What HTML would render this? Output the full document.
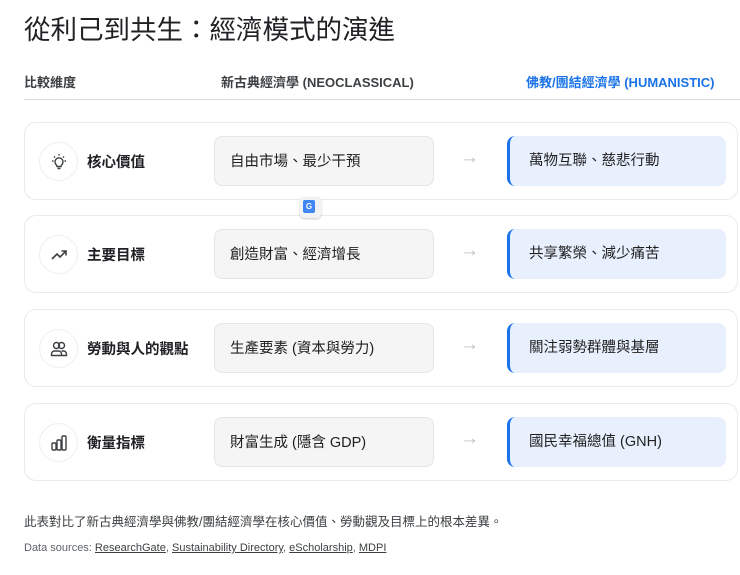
<!DOCTYPE html>
<html><head><meta charset="utf-8"><style>
*{margin:0;padding:0;box-sizing:border-box}
body{width:740px;height:575px;background:#fff;font-family:"Liberation Sans","Noto Sans CJK TC",sans-serif;color:#202124;position:relative;overflow:hidden}
.t{position:absolute;left:24px;top:8px;font-size:26.5px;font-weight:400;letter-spacing:0}
.h{position:absolute;top:72px;font-size:13px;font-weight:700;color:#3c4043}
.line{position:absolute;left:24px;top:99px;width:716px;height:1px;background:#dadce0}
.row{position:absolute;left:24px;width:714px;height:78px;border:1px solid #e8eaed;border-radius:12px;background:#fff}
.ic{position:absolute;left:14px;top:19px;width:39px;height:39px;border-radius:50%;border:1px solid #eceff1;display:flex;align-items:center;justify-content:center}
.lb{position:absolute;left:62px;top:28px;font-size:14.5px;font-weight:700}
.n{position:absolute;left:189px;top:13px;width:220px;height:50px;background:#f5f5f5;border:1px solid #e5e5e5;border-radius:8px;font-size:14.5px;padding:13px 0 0 15px;color:#1f1f1f}
.ar{position:absolute;left:435px;top:24px;color:#bdbdbd;font-size:19px}
.u{position:absolute;left:482px;top:13px;width:219px;height:50px;background:#e8f0fe;border-left:3px solid #1a73e8;border-radius:8px;font-size:14.5px;padding:13px 0 0 19px;color:#1f1f1f}
.f{position:absolute;left:24px;top:511px;font-size:12.5px;color:#3c4043}
.d{position:absolute;left:24px;top:542px;font-size:11px;color:#5f6368}
.d u{color:#3c4043}
</style></head><body>
<div class="t">從利己到共生：經濟模式的演進</div>
<div class="h" style="left:24px">比較維度</div>
<div class="h" style="left:221px">新古典經濟學 (NEOCLASSICAL)</div>
<div class="h" style="left:526px;color:#1a73e8">佛教/團結經濟學 (HUMANISTIC)</div>
<div class="line"></div>

<div class="row" style="top:122px"><div class="ic"><svg width="20" height="20" viewBox="0 0 20 20" fill="none" stroke="#3c4043" stroke-width="1.4"><path d="M7 12.5a4 4 0 1 1 6 0c-.6.6-1 1.2-1 2H8c0-.8-.4-1.4-1-2zM8.5 16.5h3M10 2v1.5M3 9h1.5M15.5 9H17M5 4.5l1 1M15 4.5l-1 1"/></svg></div><div class="lb">核心價值</div><div class="n">自由市場、最少干預</div><div class="ar">→</div><div class="u">萬物互聯、慈悲行動</div></div>

<div class="row" style="top:215px"><div class="ic"><svg width="20" height="20" viewBox="0 0 20 20" fill="none" stroke="#3c4043" stroke-width="1.6"><path d="M3 14l5-5 3 3 6-6M12.5 6H17v4.5"/></svg></div><div class="lb">主要目標</div><div class="n">創造財富、經濟增長</div><div class="ar">→</div><div class="u">共享繁榮、減少痛苦</div></div>

<div class="row" style="top:309px"><div class="ic"><svg width="20" height="20" viewBox="0 0 20 20" fill="none" stroke="#3c4043" stroke-width="1.4"><circle cx="7.5" cy="6.5" r="3"/><circle cx="12.5" cy="6.5" r="3"/><path d="M2.5 16.5v-1.5a3 3 0 0 1 3-3h4a3 3 0 0 1 3 3v1.5zM12.5 12h2a3 3 0 0 1 3 3v1.5h-5"/></svg></div><div class="lb">勞動與人的觀點</div><div class="n">生產要素 (資本與勞力)</div><div class="ar">→</div><div class="u">關注弱勢群體與基層</div></div>

<div class="row" style="top:403px"><div class="ic"><svg width="20" height="20" viewBox="0 0 20 20" fill="none" stroke="#3c4043" stroke-width="1.4"><rect x="3" y="10" width="4" height="7" rx="1"/><rect x="8" y="7" width="4" height="10" rx="1"/><rect x="13" y="3" width="4" height="14" rx="1"/></svg></div><div class="lb">衡量指標</div><div class="n">財富生成 (隱含 GDP)</div><div class="ar">→</div><div class="u">國民幸福總值 (GNH)</div></div>

<div style="position:absolute;left:300px;top:197px;width:21px;height:21px;border-radius:4px;background:#f1f3f4;box-shadow:0 1px 2px rgba(0,0,0,.2)"><div style="position:absolute;left:3px;top:3px;width:12px;height:13px;background:#4285f4;border-radius:2px;color:#fff;font-size:8px;font-weight:700;text-align:center;line-height:13px">G</div></div>

<div class="f">此表對比了新古典經濟學與佛教/團結經濟學在核心價值、勞動觀及目標上的根本差異。</div>
<div class="d">Data sources: <u>ResearchGate</u>, <u>Sustainability Directory</u>, <u>eScholarship</u>, <u>MDPI</u></div>
</body></html>
